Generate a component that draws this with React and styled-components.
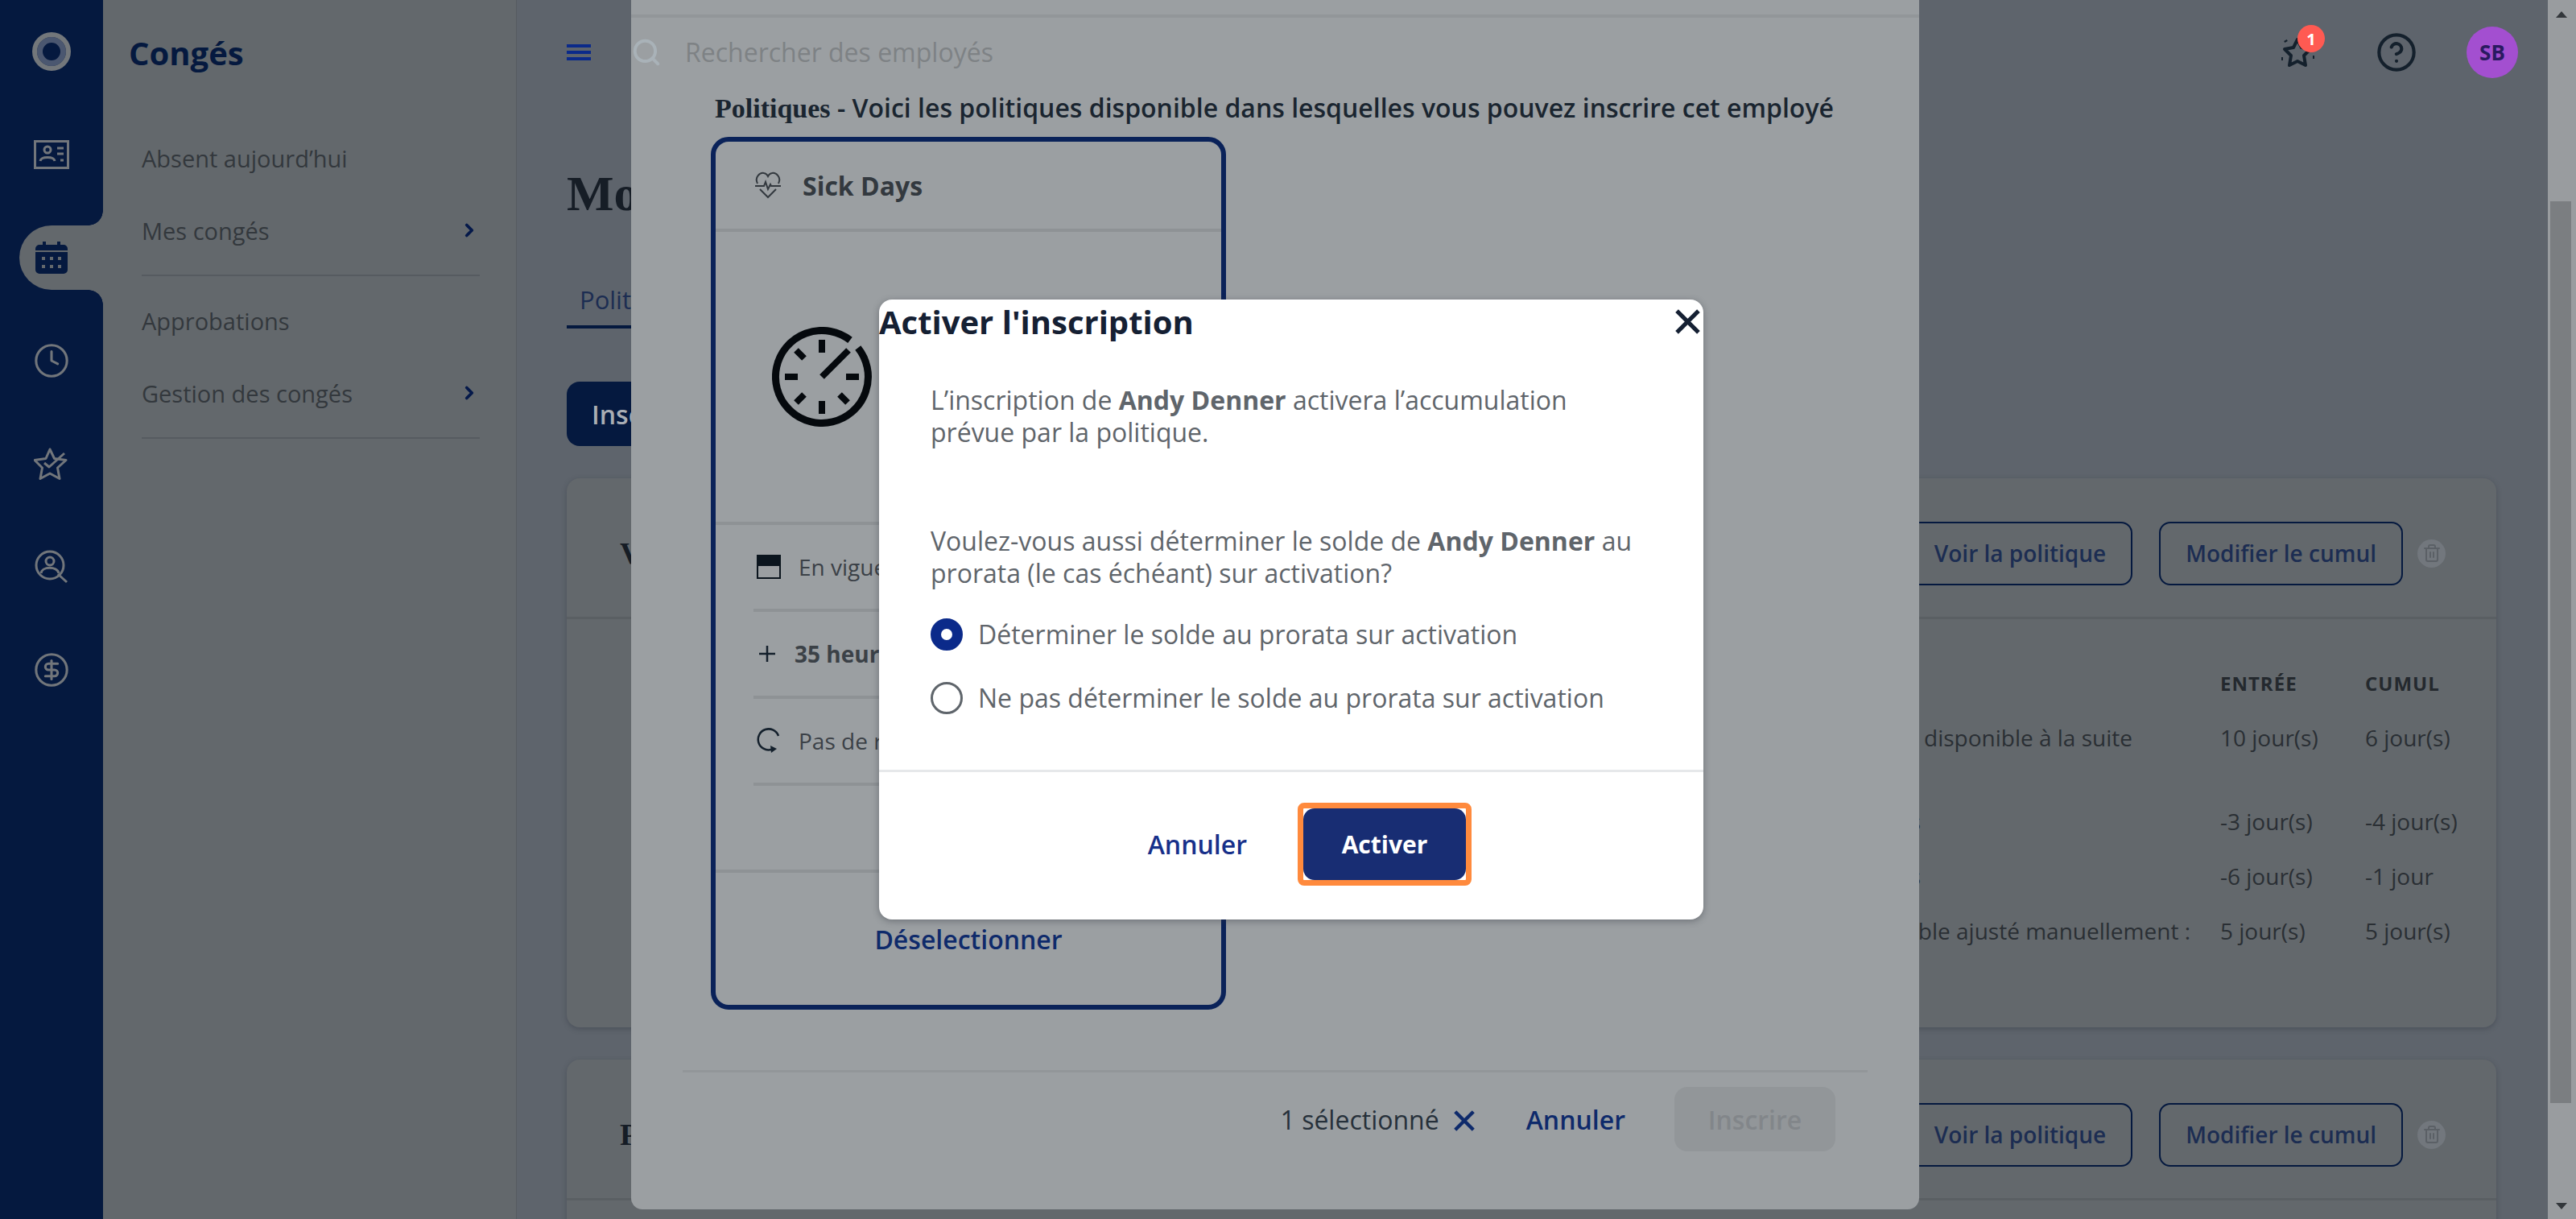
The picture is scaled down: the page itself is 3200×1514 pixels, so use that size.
import React from "react";
import styled, {createGlobalStyle} from "styled-components";
import {ChevronRight, Clock, CircleDollarSign, CircleHelp, Search, Trash2} from "lucide-react";

const GlobalStyle = createGlobalStyle`
  html, body {
    margin: 0;
    padding: 0;
    width: 3200px;
    height: 1514px;
    overflow: hidden;
    font-family: "Open Sans", "Liberation Sans", sans-serif;
  }
  * {
    box-sizing: border-box;
  }
`;

const Shell = styled.div`
  position: relative;
  display: flex;
  width: 3200px;
  height: 1514px;
  overflow: hidden;
  background: #5e646c;
`;

const Rail = styled.nav`
  flex: 0 0 128px;
  display: flex;
  flex-direction: column;
  background: #05193f;
`;

const RailCell = styled.div`
  flex: 0 0 128px;
  display: flex;
  align-items: center;
  justify-content: center;
  color: #72767b;
`;

const ActiveCell = styled(RailCell)`
  position: relative;
  flex-basis: 80px;
  margin: 24px 0 24px 24px;
  padding-right: 24px;
  color: #05193f;
  background: #63686c;
  border-radius: 40px 0 0 40px;

  &::before,
  &::after {
    content: "";
    position: absolute;
    right: 0;
    width: 18px;
    height: 18px;
  }
  &::before {
    top: -18px;
    background: radial-gradient(circle at 0 0, #05193f 17.5px, #63686c 18px);
  }
  &::after {
    bottom: -18px;
    background: radial-gradient(circle at 0 100%, #05193f 17.5px, #63686c 18px);
  }
`;

const Logo = styled.div`
  width: 48px;
  height: 48px;
  border-radius: 50%;
  background: #05193f;
  border: 6px solid #73777b;
  box-shadow: inset 0 0 0 7px #4b5770;
`;

const SideNav = styled.aside`
  flex: 0 0 514px;
  padding: 0 45px 0 32px;
  background: #63686c;
  border-right: 1px solid #565b61;
`;

const SideTitle = styled.h2`
  margin: 0 0 64px;
  padding-top: 41px;
  font-size: 40px;
  line-height: 50px;
  font-weight: 700;
  color: #05193f;
`;

const SideItem = styled.div`
  display: flex;
  align-items: center;
  justify-content: space-between;
  height: 90px;
  margin-left: 16px;
  font-size: 29px;
  font-weight: 400;
  color: #33383d;
  margin-top: ${({$first}) => ($first ? "-4px" : "0")};
`;

const SideRule = styled.div`
  height: 2px;
  margin: 10px 0 10px 16px;
  background: #565b60;
`;

const Main = styled.main`
  flex: 1;
  min-width: 0;
  padding: 0 64px 0 62px;
`;

const TopBar = styled.header`
  display: flex;
  align-items: center;
  justify-content: space-between;
  height: 130px;
`;

const MenuLines = styled.svg`
  width: 30px;
  height: 20px;
  color: #0b2a8a;
`;

const TopActions = styled.div`
  display: flex;
  align-items: center;
`;

const StarWrap = styled.div`
  position: relative;
  display: flex;
  width: 44px;
  margin-right: 75px;
  color: #14202c;
`;

const Badge = styled.span`
  position: absolute;
  top: -14px;
  left: 22px;
  width: 34px;
  height: 34px;
  display: flex;
  align-items: center;
  justify-content: center;
  border-radius: 50%;
  background: #ff5a52;
  color: #fff;
  font-size: 20px;
  font-weight: 700;
`;

const Avatar = styled.div`
  width: 64px;
  height: 64px;
  margin-left: 61px;
  margin-right: -27px;
  display: flex;
  align-items: center;
  justify-content: center;
  border-radius: 50%;
  background: #a34fd0;
  color: #2a1a60;
  font-size: 26px;
  font-weight: 700;
`;

const PageTitle = styled.h1`
  margin: 0;
  font-family: "Liberation Serif", serif;
  font-size: 62px;
  line-height: 220px;
  font-weight: 700;
  color: #161d26;
  height: 185px;
`;

const Tab = styled.div`
  display: inline-block;
  height: 93px;
  padding: 39px 32px 0 16px;
  font-size: 31px;
  line-height: 36px;
  font-weight: 500;
  color: #1c2d52;
  border-bottom: 4px solid #05193f;
`;

const TabBar = styled.div`
  height: 159px;
`;

const EnrollButton = styled.div`
  display: flex;
  align-items: center;
  width: 200px;
  height: 80px;
  padding-left: 31px;
  border-radius: 16px;
  background: #05193f;
  color: #a9adb4;
  font-size: 32px;
  font-weight: 600;
`;

const PolicyCard = styled.section`
  margin-top: 40px;
  height: ${({$height}) => $height}px;
  background: #63686c;
  border-radius: 16px;
  box-shadow: 0 2px 6px rgba(40, 46, 56, 0.35);
`;

const PolicyHeader = styled.div`
  display: flex;
  align-items: center;
  justify-content: space-between;
  height: 175px;
  padding: 14px 63px 0 66px;
  border-bottom: 3px solid #5a5f63;
`;

const PolicyName = styled.div`
  font-family: "Liberation Serif", serif;
  font-size: 38px;
  font-weight: 700;
  color: #161d26;
`;

const PolicyActions = styled.div`
  display: flex;
  align-items: center;
`;

const OutlineButton = styled.div`
  display: flex;
  align-items: center;
  height: 79px;
  margin-right: 33px;
  padding: 0 31px;
  border: 2px solid #05193f;
  border-radius: 14px;
  color: #1c2d52;
  font-size: 28px;
  font-weight: 600;
  white-space: nowrap;
`;

const TrashDot = styled.div`
  width: 35px;
  height: 35px;
  margin-left: -15px;
  display: flex;
  align-items: center;
  justify-content: center;
  border-radius: 50%;
  background: #72777d;
  color: #5b6066;
`;

const TableArea = styled.div`
  padding-top: 45px;
`;

const TableRow = styled.div`
  display: grid;
  grid-template-columns: 1fr 180px 163px;
  align-items: center;
  height: 68px;
  margin-top: ${({$gap}) => $gap || 0}px;
  font-size: 28px;
  color: #2a2f34;
  white-space: nowrap;
`;

const HeadCell = styled.div`
  grid-column: ${({$col}) => $col};
  font-size: 24px;
  font-weight: 700;
  letter-spacing: 1px;
  color: #24292e;
`;

const DescCell = styled.div`
  text-align: right;
  padding-right: ${({$inset}) => $inset}px;
`;

const ScrollTrack = styled.div`
  flex: 0 0 35px;
  position: relative;
  background: #999c9f;
`;

const ScrollThumb = styled.div`
  position: absolute;
  top: 250px;
  left: 3px;
  width: 26px;
  height: 1120px;
  background: #7b7e81;
`;

const ScrollArrow = styled.div`
  position: absolute;
  left: 10px;
  width: 0;
  height: 0;
  border-left: 7px solid transparent;
  border-right: 7px solid transparent;
  ${({$down}) =>
    $down
      ? "bottom: 12px; border-top: 8px solid #33373b;"
      : "top: 14px; border-bottom: 8px solid #33373b;"}
`;

const Drawer = styled.div`
  position: absolute;
  left: 784px;
  top: 0;
  width: 1600px;
  height: 1502px;
  padding-top: 18px;
  background: #9b9fa2;
  border-radius: 0 0 14px 14px;
`;

const DrawerRule = styled.div`
  height: 4px;
  background: #929699;
`;

const SearchRow = styled.div`
  display: flex;
  align-items: center;
  height: 85px;
  color: #a9b2b8;
`;

const SearchText = styled.span`
  margin-left: 29px;
  font-size: 32px;
  color: #7e8285;
`;

const DrawerHeading = styled.div`
  height: 54px;
  padding-left: 104px;
  font-size: 32px;
  line-height: 54px;
  font-weight: 600;
  color: #1a2530;
  white-space: nowrap;
`;

const SerifWord = styled.span`
  font-family: "Liberation Serif", serif;
  font-size: 34px;
  font-weight: 700;
`;

const SelectCard = styled.div`
  margin: 9px 0 0 99px;
  width: 640px;
  height: 1084px;
  border: 6px solid #0a2259;
  border-radius: 22px;
  display: flex;
  flex-direction: column;
`;

const SelectHeader = styled.div`
  display: flex;
  align-items: center;
  flex: 0 0 112px;
  padding-left: 48px;
  border-bottom: 4px solid #8e9295;
  color: #33393f;
  font-size: 32px;
  font-weight: 700;
  gap: 26px;
`;

const ClockArea = styled.div`
  display: flex;
  align-items: center;
  flex: 0 0 364px;
  padding-left: 70px;
  border-bottom: 4px solid #8e9295;
`;

const InfoRow = styled.div`
  display: flex;
  align-items: center;
  height: 108px;
  margin-left: 47px;
  padding-left: ${({$pad}) => $pad}px;
  border-bottom: 4px solid #8e9295;
  color: #3b4147;
  font-size: 28px;
  white-space: nowrap;
  gap: ${({$gap}) => $gap}px;
  font-weight: ${({$bold}) => ($bold ? 700 : 400)};
`;

const CardSpacer = styled.div`
  flex: 0 0 108px;
  border-bottom: 4px solid #8e9295;
`;

const Deselect = styled.div`
  flex: 1;
  display: flex;
  align-items: center;
  justify-content: center;
  color: #0e2a6b;
  font-size: 32px;
  font-weight: 600;
`;

const FooterRule = styled.div`
  height: 3px;
  margin: 75px 64px 0;
  background: #929699;
`;

const DrawerFooter = styled.div`
  display: flex;
  align-items: center;
  justify-content: flex-end;
  padding: 18px 104px 0 0;
`;

const SelectedCount = styled.span`
  font-size: 32px;
  color: #26303a;
`;

const ClearIcon = styled.span`
  display: flex;
  margin: 4px 64px 0 18px;
  color: #0e2a6b;
`;

const TextButton = styled.span`
  font-size: 32px;
  font-weight: 600;
  color: ${({$bright}) => ($bright ? "#17308a" : "#0e2a6b")};
`;

const DisabledButton = styled.div`
  display: flex;
  align-items: center;
  justify-content: center;
  width: 200px;
  height: 80px;
  margin-left: 61px;
  border-radius: 16px;
  background: #929699;
  color: #82868a;
  font-size: 32px;
  font-weight: 600;
`;

const ModalLayer = styled.div`
  position: absolute;
  inset: 0;
  display: flex;
  align-items: center;
  justify-content: center;
  padding-left: 8px;
`;

const Modal = styled.div`
  width: 1024px;
  height: 770px;
  background: #fff;
  border-radius: 16px;
  box-shadow: 0 2px 8px rgba(40, 46, 56, 0.4);
`;

const ModalHead = styled.div`
  display: flex;
  align-items: center;
  justify-content: space-between;
  height: 54px;
  padding-right: 4px;
  color: #152033;
`;

const ModalTitle = styled.h3`
  margin: 0;
  font-size: 40px;
  font-weight: 700;
  color: #152033;
`;

const ModalBody = styled.div`
  padding: 51px 80px 0 64px;
  height: 533px;
  border-bottom: 3px solid #e6e8ea;
  color: #5f656b;
  font-size: 32px;
  line-height: 40px;
`;

const Paragraph = styled.p`
  margin: 0 0 ${({$gap}) => $gap}px;
`;

const RadioRow = styled.label`
  display: flex;
  align-items: center;
  height: 79px;
  gap: 19px;
`;

const RadioDot = styled.span`
  flex: 0 0 40px;
  height: 40px;
  border-radius: 50%;
  border: ${({$on}) => ($on ? "13px solid #0b2a8a" : "3px solid #5f656b")};
  background: #fff;
`;

const ModalFooter = styled.div`
  display: flex;
  align-items: center;
  justify-content: flex-end;
  gap: 63px;
  padding: 38px 288px 0 0;
`;

const FocusRing = styled.div`
  border: 7px solid #ff8a3d;
  border-radius: 8px;
  background: #fff;
`;

const PrimaryButton = styled.div`
  display: flex;
  align-items: center;
  justify-content: center;
  width: 202px;
  height: 89px;
  border-radius: 14px;
  background: #182d73;
  color: #fff;
  font-size: 30px;
  font-weight: 700;
`;

const CrossIcon = ({size, weight}) => (
  <svg width={size} height={size} viewBox="0 0 30 30" stroke="currentColor" strokeWidth={weight}>
    <path d="M2 2l26 26M28 2L2 28" />
  </svg>
);

const IdCardIcon = () => (
  <svg width="44" height="36" viewBox="0 0 44 36" fill="none" stroke="currentColor" strokeWidth="3">
    <rect x="1.5" y="1.5" width="41" height="33" />
    <circle cx="17" cy="12" r="4" />
    <path d="M8 26c1-6 17-6 18 0M29 10h8M29 17h8M33 25h4" />
  </svg>
);

const CalendarIcon = () => (
  <svg width="40" height="40" viewBox="0 0 40 40" fill="currentColor">
    <path d="M9 0h4v4h14V0h4v4h4a5 5 0 0 1 5 5v2H0V9a5 5 0 0 1 5-5h4zM0 13h40v22a5 5 0 0 1-5 5H5a5 5 0 0 1-5-5z" />
    <g fill="#63686c">
      <rect x="8" y="19" width="4" height="4" />
      <rect x="18" y="19" width="4" height="4" />
      <rect x="28" y="19" width="4" height="4" />
      <rect x="8" y="29" width="4" height="4" />
      <rect x="18" y="29" width="4" height="4" />
      <rect x="28" y="29" width="4" height="4" />
    </g>
  </svg>
);

const CheckStarIcon = () => (
  <svg width="44" height="42" viewBox="0 0 44 42" fill="none" stroke="currentColor" strokeWidth="3" strokeLinejoin="round">
    <path d="M20 3l5.500 11.500 14.500 2-10.500 9.500 2.500 13.500-12-6.500-12 6.500 2.500-13.500L1 16.500l14-2z" />
    <path d="M13 20l6 5 19-17" />
  </svg>
);

const UserSearchIcon = () => (
  <svg width="42" height="42" viewBox="0 0 42 42" fill="none" stroke="currentColor" strokeWidth="3">
    <circle cx="19" cy="19" r="17" />
    <circle cx="19" cy="14" r="5" />
    <path d="M8 29c1-9 20-9 22 0M29 30l11 10" />
  </svg>
);

const HeaderStarIcon = () => (
  <svg width="44" height="40" viewBox="0 0 44 40" fill="none" stroke="currentColor" strokeWidth="4" strokeLinejoin="round">
    <path d="M22 4l5 10 11 2-8 8 2 12-10-5-10 5 2-12-8-8 11-2z" />
    <path d="M7 5l1 2M2 28h2M41 26h2" />
  </svg>
);

const HeartPulseIcon = () => (
  <svg width="34" height="34" viewBox="0 0 34 34" fill="none" stroke="#33393f" strokeWidth="2">
    <path d="M4 15C0 7 7 1 12 2c3 .5 4 2 5 4 1-2 2-3.500 5-4 5-1 12 5 8 13M7 22l10 10 10-10" />
    <path d="M1 18h11l2-5 3 9 3-6 1 2h12" />
  </svg>
);

const BigClockIcon = () => (
  <svg width="124" height="124" viewBox="0 0 124 124" fill="none" stroke="#05090d" strokeWidth="9">
    <path d="M97 16.400A57.500 57.500 0 1 0 106.800 26" />
    <path strokeWidth="8" d="M62 16v16M62 92v16M16 62h16M92 62h16M30 29l10 10M30 94l10-10M94 94l-10-10M62 62l33-33" />
  </svg>
);

const SmallCalendarIcon = () => (
  <svg width="30" height="30" viewBox="0 0 30 30">
    <path d="M0 0h5v2h5V0h5v2h5V0h5v2h5v12H0z" fill="#0b151e" />
    <rect x="1" y="1" width="28" height="28" fill="none" stroke="#0b151e" strokeWidth="2" />
  </svg>
);

const PlusIcon = () => (
  <svg width="20" height="20" viewBox="0 0 20 20" stroke="#14202c" strokeWidth="2.500">
    <path d="M10 0v20M0 10h20" />
  </svg>
);

const RepeatIcon = () => (
  <svg width="30" height="32" viewBox="0 0 30 32" fill="none" stroke="#14202c" strokeWidth="2.500">
    <path d="M27 10A13 13 0 1 0 18 27" />
    <path d="M18 31l-1-9 8 4z" fill="#14202c" stroke="none" />
  </svg>
);

const entries = [
  {text: "Solde actuel disponible à la suite", inset: 109, input: "10 jour(s)", total: "6 jour(s)"},
  {text: "Congés utilisés", inset: 372, input: "-3 jour(s)", total: "-4 jour(s)", gap: 36},
  {text: "Congés planifiés", inset: 372, input: "-6 jour(s)", total: "-1 jour"},
  {text: "Solde disponible ajusté manuellement :", inset: 37, input: "5 jour(s)", total: "5 jour(s)"},
];

const PolicyTop = ({name}) => (
  <PolicyHeader>
    <PolicyName>{name}</PolicyName>
    <PolicyActions>
      <OutlineButton>Voir la politique</OutlineButton>
      <OutlineButton>Modifier le cumul</OutlineButton>
      <TrashDot>
        <Trash2 size={24} strokeWidth={2} />
      </TrashDot>
    </PolicyActions>
  </PolicyHeader>
);

export default function App() {
  return (
    <Shell>
      <GlobalStyle />
      <Rail>
        <RailCell><Logo /></RailCell>
        <RailCell><IdCardIcon /></RailCell>
        <ActiveCell><CalendarIcon /></ActiveCell>
        <RailCell><Clock size={46} strokeWidth={1.6} /></RailCell>
        <RailCell><CheckStarIcon /></RailCell>
        <RailCell><UserSearchIcon /></RailCell>
        <RailCell><CircleDollarSign size={46} strokeWidth={1.6} /></RailCell>
      </Rail>

      <SideNav>
        <SideTitle>Congés</SideTitle>
        <SideItem $first>Absent aujourd’hui</SideItem>
        <SideItem>
          Mes congés
          <ChevronRight size={26} strokeWidth={3.5} color="#05194a" />
        </SideItem>
        <SideRule />
        <SideItem>Approbations</SideItem>
        <SideItem>
          Gestion des congés
          <ChevronRight size={26} strokeWidth={3.5} color="#05194a" />
        </SideItem>
        <SideRule />
      </SideNav>

      <Main>
        <TopBar>
          <MenuLines viewBox="0 0 30 20" fill="currentColor">
            <rect width="30" height="4" />
            <rect y="8" width="30" height="4" />
            <rect y="16" width="30" height="4" />
          </MenuLines>
          <TopActions>
            <StarWrap>
              <HeaderStarIcon />
              <Badge>1</Badge>
            </StarWrap>
            <CircleHelp size={52} strokeWidth={1.9} color="#14202c" />
            <Avatar>SB</Avatar>
          </TopActions>
        </TopBar>
        <PageTitle>Mo</PageTitle>
        <TabBar>
          <Tab>Politiques</Tab>
        </TabBar>
        <EnrollButton>Inscrire</EnrollButton>

        <PolicyCard $height={682}>
          <PolicyTop name="Vacances" />
          <TableArea>
            <TableRow>
              <HeadCell $col={2}>ENTRÉE</HeadCell>
              <HeadCell $col={3}>CUMUL</HeadCell>
            </TableRow>
            {entries.map(({text, inset, input, total, gap}) => (
              <TableRow key={text} $gap={gap}>
                <DescCell $inset={inset}>{text}</DescCell>
                <div>{input}</div>
                <div>{total}</div>
              </TableRow>
            ))}
          </TableArea>
        </PolicyCard>

        <PolicyCard $height={300}>
          <PolicyTop name="Personnel" />
        </PolicyCard>
      </Main>

      <ScrollTrack>
        <ScrollArrow />
        <ScrollThumb />
        <ScrollArrow $down />
      </ScrollTrack>

      <Drawer>
        <DrawerRule />
        <SearchRow>
          <Search size={38} strokeWidth={2.5} />
          <SearchText>Rechercher des employés</SearchText>
        </SearchRow>
        <DrawerHeading>
          <SerifWord>Politiques</SerifWord> - Voici les politiques disponible dans lesquelles vous pouvez inscrire cet employé
        </DrawerHeading>
        <SelectCard>
          <SelectHeader>
            <HeartPulseIcon />
            Sick Days
          </SelectHeader>
          <ClockArea>
            <BigClockIcon />
          </ClockArea>
          <InfoRow $pad={4} $gap={22}>
            <SmallCalendarIcon />
            En vigueur le 1 janvier
          </InfoRow>
          <InfoRow $pad={7} $gap={24} $bold>
            <PlusIcon />
            35 heures par année
          </InfoRow>
          <InfoRow $pad={4} $gap={22}>
            <RepeatIcon />
            Pas de report
          </InfoRow>
          <CardSpacer />
          <Deselect>Déselectionner</Deselect>
        </SelectCard>
        <FooterRule />
        <DrawerFooter>
          <SelectedCount>1 sélectionné</SelectedCount>
          <ClearIcon>
            <CrossIcon size={26} weight={5} />
          </ClearIcon>
          <TextButton>Annuler</TextButton>
          <DisabledButton>Inscrire</DisabledButton>
        </DrawerFooter>
      </Drawer>

      <ModalLayer>
        <Modal>
          <ModalHead>
            <ModalTitle>Activer l'inscription</ModalTitle>
            <CrossIcon size={31} weight={5} />
          </ModalHead>
          <ModalBody>
            <Paragraph $gap={95}>
              L’inscription de <b>Andy Denner</b> activera l’accumulation prévue par la politique.
            </Paragraph>
            <Paragraph $gap={16}>
              Voulez-vous aussi déterminer le solde de <b>Andy Denner</b> au prorata (le cas échéant) sur activation?
            </Paragraph>
            <RadioRow>
              <RadioDot $on />
              Déterminer le solde au prorata sur activation
            </RadioRow>
            <RadioRow>
              <RadioDot />
              Ne pas déterminer le solde au prorata sur activation
            </RadioRow>
          </ModalBody>
          <ModalFooter>
            <TextButton $bright>Annuler</TextButton>
            <FocusRing>
              <PrimaryButton>Activer</PrimaryButton>
            </FocusRing>
          </ModalFooter>
        </Modal>
      </ModalLayer>
    </Shell>
  );
}
